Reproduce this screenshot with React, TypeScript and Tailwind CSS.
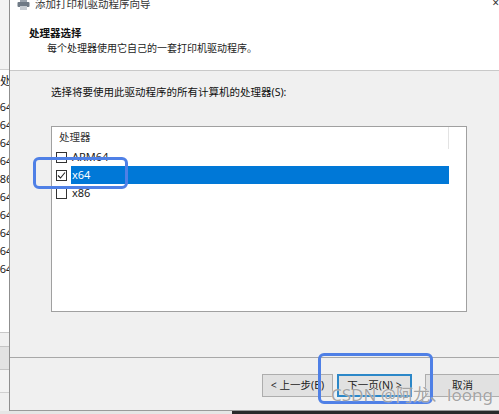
import React from "react";

const FONT = '"Noto Sans", "Noto Sans CJK SC", sans-serif';

function Checkbox({ checked }: { checked?: boolean }) {
  return (
    <div className="w-[11px] h-[11px] border border-[#333333] bg-white flex items-center justify-center shrink-0">
      {checked && (
        <svg width="9" height="9" viewBox="0 0 9 9">
          <path d="M1 4.5 L3.5 7 L8 1.5" stroke="#222" strokeWidth="1.1" fill="none" />
        </svg>
      )}
    </div>
  );
}

function Row({ label, checked, selected }: { label: string; checked?: boolean; selected?: boolean }) {
  return (
    <div className="h-[18px] flex items-center">
      <div className="ml-[4px] mr-[4px]">
        <Checkbox checked={checked} />
      </div>
      <div
        className={
          "h-[18px] flex items-center pl-[1px] text-[11px] " +
          (selected ? "bg-[#0078d7] text-white w-[378px]" : "text-[#1a1a1a]")
        }
      >
        {label}
      </div>
    </div>
  );
}

export default function App() {
  const stripItems = ["x64", "x64", "x64", "x64", "x86", "x64", "x64", "x64", "x64", "x64"];
  return (
    <div
      className="relative w-[499px] h-[414px] overflow-hidden bg-[#f0f0f0] flex flex-col"
      style={{ fontFamily: FONT }}
    >
      <div className="flex h-[411px]">
        {/* background window strip */}
        <div className="w-[10px] overflow-hidden flex flex-col bg-[#f7f7f7] border-r border-[#8f8f8f] shrink-0">
          <div className="h-[70px] border-b border-[#d0d0d0] bg-[#f3f3f3]" />
          <div className="h-[262px] bg-white flex flex-col text-[11px] text-[#222] leading-[18px]">
            <div className="h-[28px] pt-[2px] whitespace-nowrap">处理器</div>
            {stripItems.map((t, i) => (
              <div key={i} className="h-[18px] -ml-[6px] whitespace-nowrap">
                {t}
              </div>
            ))}
          </div>
          <div className="h-[14px] border-t border-[#c8c8c8] bg-[#f0f0f0]" />
          <div className="h-[24px] border-y border-[#c4c4c4] bg-[#e2e2e2]" />
          <div className="h-[23px] border-b border-[#d0d0d0] bg-[#f3f3f3]" />
          <div className="flex-1 bg-[#f0f0f0]" />
        </div>

        {/* dialog */}
        <div className="flex-1 flex flex-col border-b border-[#9a9a9a]">
          {/* header */}
          <div className="h-[71px] bg-white border-b border-[#c9c9c9] flex flex-col">
            <div className="h-[11px] relative">
              <div className="flex items-center h-[14px] -mt-[3px] pl-[7px] gap-[5px]">
                <svg width="13" height="11" viewBox="0 0 13 11">
                  <rect x="3" y="0" width="7" height="3" fill="#9aa3ad" />
                  <rect x="0.5" y="3" width="12" height="5" rx="1" fill="#6f7a86" />
                  <rect x="3" y="7" width="7" height="4" fill="#c6ccd2" />
                </svg>
                <span className="text-[10.5px] text-[#333] leading-[14px]">添加打印机驱动程序向导</span>
              </div>
              <div className="absolute right-[1px] -top-[4px] text-[12px] text-[#333] leading-[14px]">×</div>
            </div>
            <div className="mt-[15px] pl-[19px] text-[10.5px] font-bold text-[#111] leading-[14px]">处理器选择</div>
            <div className="mt-[1px] pl-[37px] text-[10px] text-[#222] leading-[14px]">
              每个处理器使用它自己的一套打印机驱动程序。
            </div>
          </div>

          {/* body */}
          <div className="h-[287px] flex flex-col pl-[41px] pt-[14px] border-b border-[#a8a8a8]">
            <div className="text-[10.5px] text-[#111] leading-[14px]">选择将要使用此驱动程序的所有计算机的处理器(S):</div>
            <div className="mt-[27px] w-[416px] h-[186px] bg-white border border-[#a0a0a0] flex flex-col">
              <div className="h-[21px] flex items-center relative">
                <span className="pl-[7px] text-[10.5px] text-[#333]">处理器</span>
                <div className="absolute left-[396px] top-0 h-[22px] border-l border-[#e3e3e3]" />
              </div>
              <Row label="ARM64" />
              <Row label="x64" checked selected />
              <Row label="x86" />
            </div>
          </div>

          {/* footer */}
          <div className="flex-1 flex items-start pt-[16px] pl-[252px]">
            <div className="w-[71px] h-[23px] bg-[#e1e1e1] border border-[#adadad] flex items-center justify-center text-[10.5px] text-[#222]">
              &lt; 上一步(B)
            </div>
            <div className="ml-[4px] w-[75px] h-[23px] bg-[#e1e1e1] border-2 border-[#2b87c8] flex items-center justify-center text-[10.5px] text-[#222]">
              下一页(N) &gt;
            </div>
            <div className="ml-[13px] w-[75px] h-[23px] bg-[#e1e1e1] border border-[#adadad] flex items-center justify-center text-[10.5px] text-[#222] shrink-0">
              取消
            </div>
          </div>
        </div>
      </div>

      {/* bottom outside */}
      <div className="flex-1 flex">
        <div className="w-[232px] bg-[#e6e6e6]" />
        <div className="flex-1 bg-[#2a2a2a]" />
      </div>

      {/* annotations */}
      <div className="absolute left-[33px] top-[157px] w-[95px] h-[32px] border-[3px] border-[#4f80e6] rounded-[6px]" />
      <div className="absolute left-[318px] top-[353px] w-[115px] h-[51px] border-[3px] border-[#4f80e6] rounded-[6px]" />

      {/* watermark */}
      <div
        className="absolute left-[331px] top-[385px] text-[17px] leading-[20px] text-[#8c8c8c]/80 whitespace-nowrap"
        style={{ textShadow: "0 0 1px #ffffff" }}
      >
        CSDN @阿龙、loong
      </div>
    </div>
  );
}
